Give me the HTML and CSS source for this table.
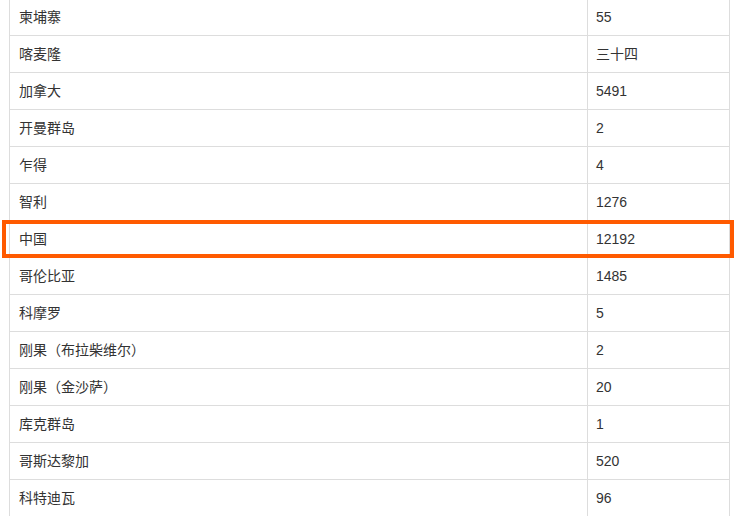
FILE: index.html
```html
<!DOCTYPE html>
<html lang="zh">
<head>
<meta charset="utf-8">
<link rel="stylesheet" href="styles.css">
</head>
<body>
<div class="wrap">
  <table class="data">
    <tr><td class="name">柬埔寨</td><td class="val">55</td></tr>
    <tr><td class="name">喀麦隆</td><td class="val">三十四</td></tr>
    <tr><td class="name">加拿大</td><td class="val">5491</td></tr>
    <tr><td class="name">开曼群岛</td><td class="val">2</td></tr>
    <tr><td class="name">乍得</td><td class="val">4</td></tr>
    <tr><td class="name">智利</td><td class="val">1276</td></tr>
    <tr><td class="name">中国</td><td class="val">12192</td></tr>
    <tr><td class="name">哥伦比亚</td><td class="val">1485</td></tr>
    <tr><td class="name">科摩罗</td><td class="val">5</td></tr>
    <tr><td class="name">刚果（布拉柴维尔）</td><td class="val">2</td></tr>
    <tr><td class="name">刚果（金沙萨）</td><td class="val">20</td></tr>
    <tr><td class="name">库克群岛</td><td class="val">1</td></tr>
    <tr><td class="name">哥斯达黎加</td><td class="val">520</td></tr>
    <tr><td class="name">科特迪瓦</td><td class="val">96</td></tr>
  </table>
  <div class="highlight"></div>
</div>
</body>
</html>
```
FILE: styles.css
```css
html, body {
  margin: 0;
  padding: 0;
  background: #fff;
  overflow: hidden;
}
body {
  font-family: "Liberation Sans", "Noto Sans CJK SC", sans-serif;
  font-size: 14px;
  color: #333;
}
.wrap {
  position: relative;
  width: 742px;
  height: 516px;
  overflow: hidden;
}
.data {
  border-collapse: collapse;
  width: 721px;
  margin: -2px 0 0 9px;
}
.data td {
  border: 1px solid #ddd;
  height: 37px;
  padding: 0 9px;
  box-sizing: border-box;
  vertical-align: middle;
  line-height: 20px;
}
.data td.name {
  width: 578px;
}
.data td.val {
  padding-left: 8px;
}
.highlight {
  position: absolute;
  left: 2px;
  top: 220px;
  width: 732px;
  height: 38px;
  border: 4px solid #ff5a00;
  box-sizing: border-box;
}
```
